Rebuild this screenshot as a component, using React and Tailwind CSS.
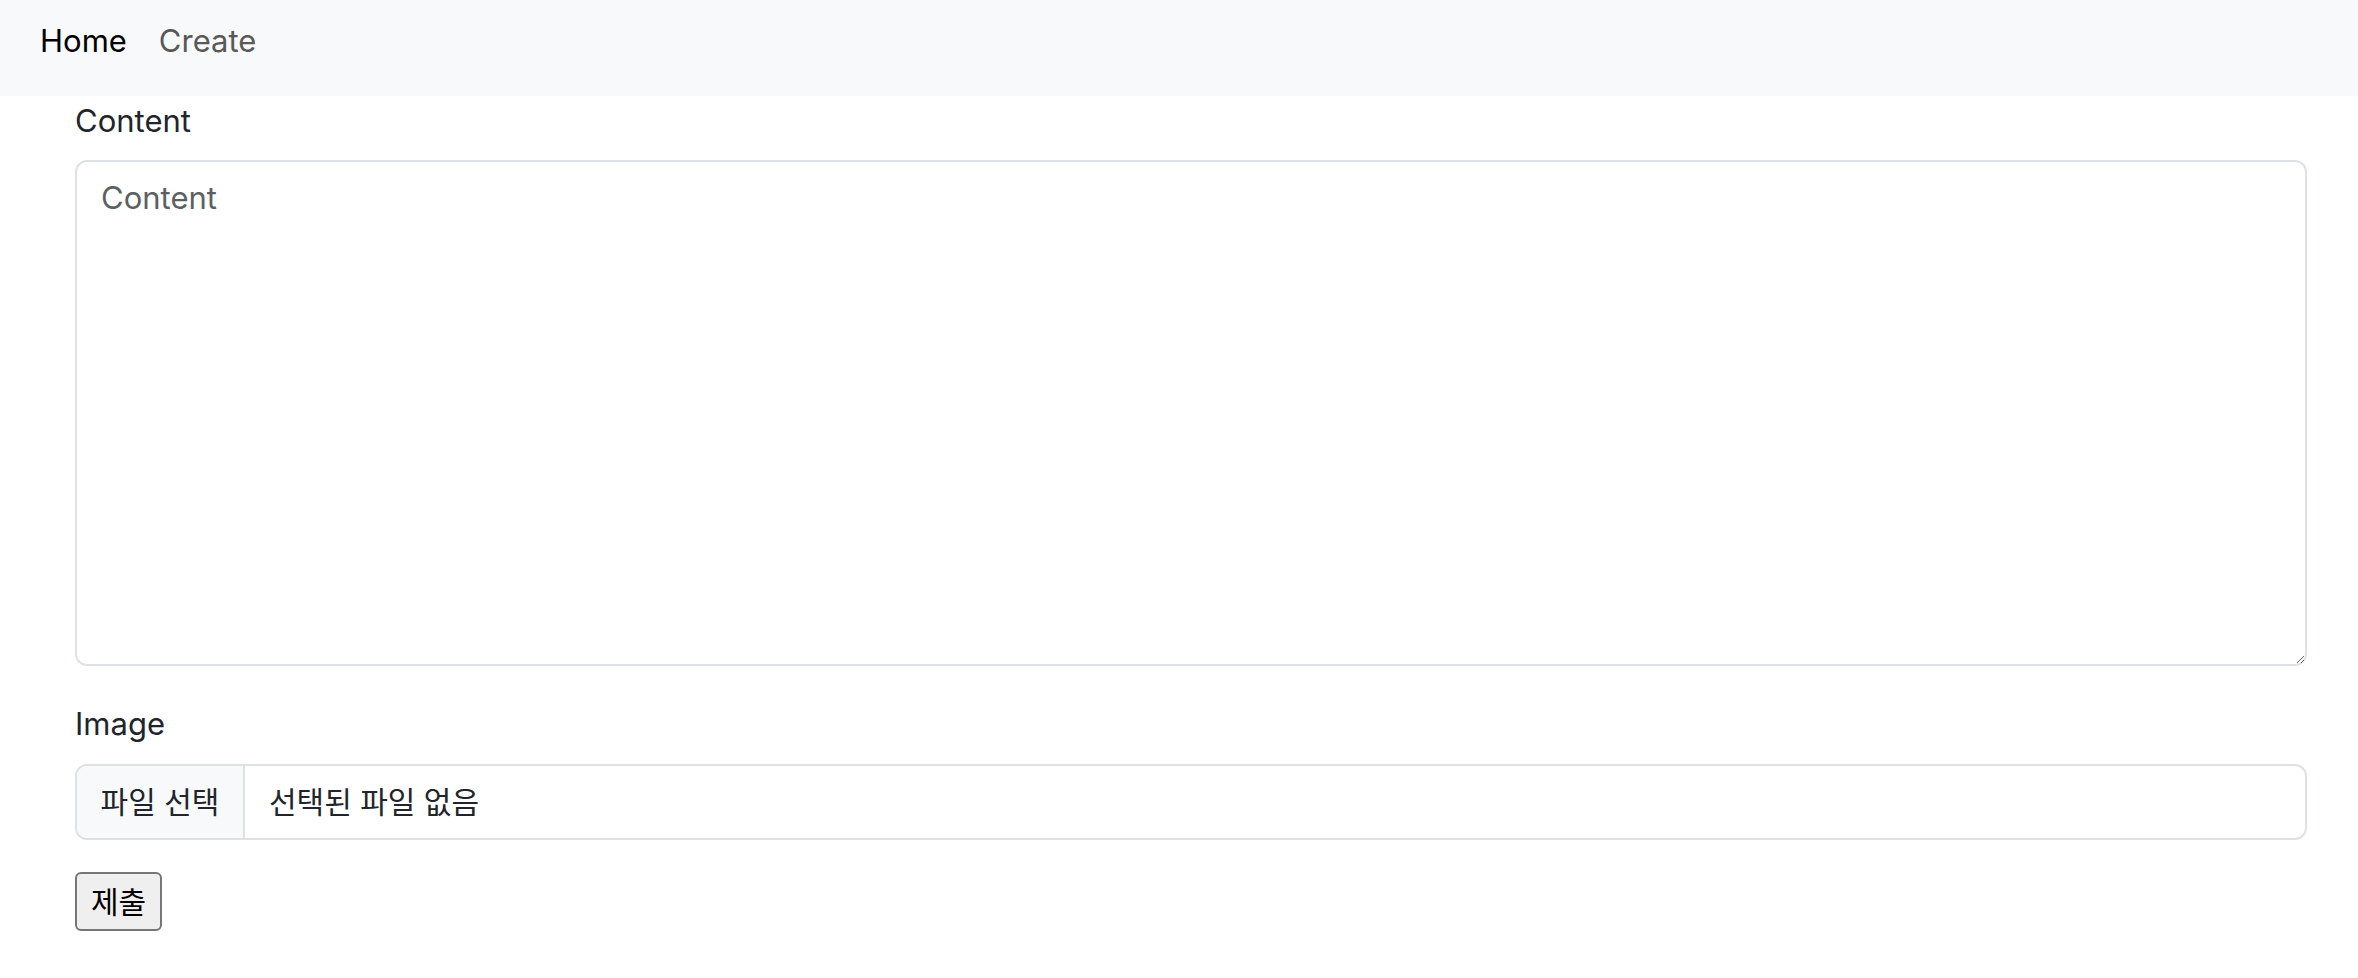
export default function App() {
  return (
    <div className="min-h-screen bg-white font-['Inter','Noto_Sans_CJK_KR',sans-serif] text-[#212529]">
      {/* nav */}
      <nav className="h-[96px] bg-[#f8f9fa] pt-[17px] pl-[40px] flex items-start text-[31px] leading-[48px]">
        <a href="#" className="text-black">Home</a>
        <a href="#" className="ml-[32px] text-[#595959]">Create</a>
      </nav>

      <main className="pl-[75px] pr-[51px]">
        <label className="block pt-[2px] text-[31px] leading-[46px] mb-[16px]">Content</label>
        <textarea
          placeholder="Content"
          className="block w-full h-[506px] border-2 border-[#dee2e6] rounded-[12px] px-[24px] py-[12px] text-[31px] leading-[48px] placeholder:text-[#5c5f63] outline-none"
        />

        <label className="block mt-[34px] text-[31px] leading-[48px] mb-[16px]">Image</label>
        <div className="flex h-[76px] border-2 border-[#dee2e6] rounded-[12px] overflow-hidden text-[30px]">
          <div className="w-[168px] shrink-0 bg-[#f8f9fa] border-r-2 border-[#dee2e6] flex items-center justify-center">
            파일 선택
          </div>
          <div className="pl-[24px] flex items-center">선택된 파일 없음</div>
        </div>

        <button className="mt-[32px] h-[59px] px-[14px] bg-[#efefef] border-2 border-[#767676] rounded-[6px] text-[30px] leading-[48px] text-black">
          제출
        </button>
      </main>
    </div>
  );
}
